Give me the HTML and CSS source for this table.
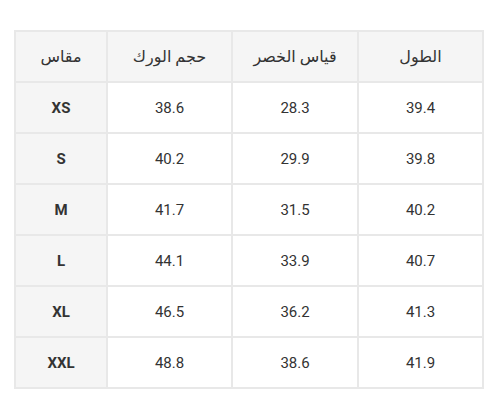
FILE: index.html
```html
<!DOCTYPE html>
<html lang="ar" dir="rtl">
<head>
<meta charset="utf-8">
<link rel="stylesheet" href="styles.css">
</head>
<body>
<div class="wrap">
<table class="size-table">
<colgroup>
<col class="c-len"><col class="c-waist"><col class="c-hip"><col class="c-size">
</colgroup>
<thead>
<tr><th>الطول</th><th>قياس الخصر</th><th>حجم الورك</th><th>مقاس</th></tr>
</thead>
<tbody>
<tr><td>39.4</td><td>28.3</td><td>38.6</td><th class="size">XS</th></tr>
<tr><td>39.8</td><td>29.9</td><td>40.2</td><th class="size">S</th></tr>
<tr><td>40.2</td><td>31.5</td><td>41.7</td><th class="size">M</th></tr>
<tr><td>40.7</td><td>33.9</td><td>44.1</td><th class="size">L</th></tr>
<tr><td>41.3</td><td>36.2</td><td>46.5</td><th class="size">XL</th></tr>
<tr><td>41.9</td><td>38.6</td><td>48.8</td><th class="size">XXL</th></tr>
</tbody>
</table>
</div>
</body>
</html>
```
FILE: styles.css
```css
html, body {
  margin: 0;
  padding: 0;
  background: #fff;
}
.wrap {
  padding: 30px 16px 0 16px;
}
.size-table {
  border-collapse: collapse;
  width: 468px;
  table-layout: fixed;
  font-family: Roboto, "DejaVu Sans", sans-serif;
  font-size: 15px;
  color: #333;
}
.c-len { width: 125px; }
.c-waist { width: 126px; }
.c-hip { width: 125px; }
.c-size { width: 92px; }
.size-table th,
.size-table td {
  border: 2px solid #e8e8e8;
  height: 51px;
  padding: 0;
  text-align: center;
  vertical-align: middle;
  box-sizing: border-box;
}
.size-table thead th {
  background: #f5f5f5;
  font-weight: normal;
  font-size: 16px;
}
.size-table td {
  background: #fff;
}
.size-table th.size {
  background: #f5f5f5;
  font-weight: bold;
}
```
